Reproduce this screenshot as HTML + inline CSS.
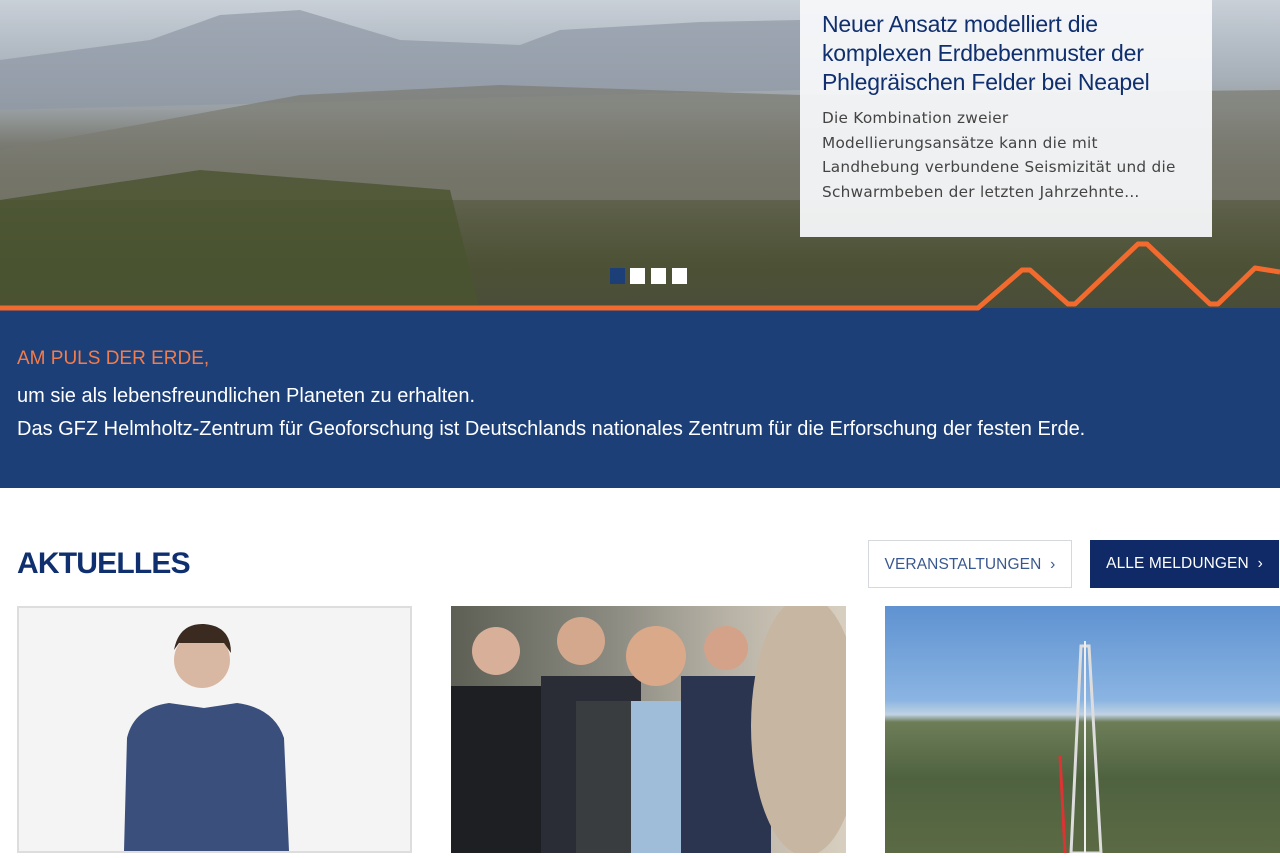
<!DOCTYPE html>
<html><head><meta charset="utf-8"><style>
*{margin:0;padding:0;box-sizing:border-box}
body{width:1280px;height:853px;overflow:hidden;font-family:"Liberation Sans",sans-serif;background:#fff;position:relative}
.hero{position:absolute;left:0;top:0;width:1280px;height:310px;background:linear-gradient(180deg,#c9d0d8 0%,#b7bfc8 12%,#a7afb8 25%,#9aa0a3 35%,#7d7f78 45%,#6a6a5c 55%,#5a5d45 70%,#4d5236 85%,#4a4d38 100%)}
.card{position:absolute;left:800px;top:0;width:412px;height:237px;background:rgba(246,247,249,.95);padding:10px 22px}
.card h2{font-size:23px;line-height:29px;color:#0f2f6f;font-weight:normal;letter-spacing:-.2px}
.card p{font-family:"DejaVu Sans",sans-serif;font-size:15.3px;line-height:24.5px;color:#444;margin-top:9px;letter-spacing:.25px;white-space:nowrap}
.band{position:absolute;left:0;top:308px;width:1280px;height:180px;background:#1c3f78;padding:40px 17px 0}
.band .o{color:#f47c4a;font-size:19px;margin-bottom:10px}
.band .w{color:#fff;font-size:20px;line-height:33px;letter-spacing:0}
h1{position:absolute;left:17px;top:547px;font-size:30px;color:#0f2f6f;font-weight:bold;letter-spacing:-.8px}
.btn{position:absolute;top:540px;height:48px;font-size:15.5px;line-height:47px;text-align:center;letter-spacing:.1px}
.b1{left:868px;width:204px;border:1px solid #d5d8dc;color:#3a5890}
.b2{left:1090px;width:189px;background:#0f2a66;color:#fff}
.img{position:absolute;top:606px;height:247px;width:395px}
</style></head><body>
<div class="hero">
<svg width="1280" height="310" style="position:absolute;left:0;top:0">
<path d="M0 60 L150 40 L220 15 L300 10 L400 40 L520 45 L560 30 L700 22 L800 20 L800 90 L0 110Z" fill="#8f98a5" opacity=".7"/>
<path d="M0 150 L300 95 L500 85 L800 95 L1280 90 L1280 200 L0 200Z" fill="#7a7b70" opacity=".7"/>
<path d="M0 200 L200 170 L450 190 L480 310 L0 310Z" fill="#4a5430" opacity=".8"/>
<rect x="610" y="268" width="15" height="16" fill="#1c3f78"/>
<rect x="630" y="268" width="15" height="16" fill="#fff"/>
<rect x="651" y="268" width="15" height="16" fill="#fff"/>
<rect x="672" y="268" width="15" height="16" fill="#fff"/>
</svg>
<div class="card"><h2>Neuer Ansatz modelliert die komplexen Erdbebenmuster der Phlegräischen Felder bei Neapel</h2><p>Die Kombination zweier<br>Modellierungsansätze kann die mit<br>Landhebung verbundene Seismizität und die<br>Schwarmbeben der letzten Jahrzehnte...</p></div>
</div>
<div class="band"><div class="o">AM PULS DER ERDE,</div><div class="w">um sie als lebensfreundlichen Planeten zu erhalten.<br>Das GFZ Helmholtz-Zentrum für Geoforschung ist Deutschlands nationales Zentrum für die Erforschung der festen Erde.</div></div>
<svg width="1280" height="320" style="position:absolute;left:0;top:0">
<path d="M0 308 L978 308 L1022 270 L1030 270 L1068 304 L1075 304 L1138 244 L1147 244 L1210 304 L1218 304 L1255 268 L1280 272" fill="none" stroke="#f26a2e" stroke-width="5" stroke-linejoin="round"/>
</svg>
<h1>AKTUELLES</h1>
<div class="btn b1">VERANSTALTUNGEN &nbsp;›</div>
<div class="btn b2">ALLE MELDUNGEN &nbsp;›</div>
<div class="img" style="left:17px;border:2px solid #ddd;background:#f4f4f4">
<svg width="391" height="243"><circle cx="183" cy="52" r="28" fill="#d9b8a3"/><path d="M155 42 Q160 15 185 16 Q212 18 212 45 L205 35 L160 35Z" fill="#3a2a20"/><path d="M105 243 L108 130 Q115 100 150 95 L185 100 L218 95 Q255 100 265 130 L270 243Z" fill="#3b4f7c"/></svg></div>
<div class="img" style="left:451px;background:linear-gradient(90deg,#5d5f55,#8a8a80 40%,#b8b2a6 70%,#d8cfc0)">
<svg width="395" height="247"><rect x="0" y="80" width="100" height="167" fill="#1d1f22"/><rect x="90" y="70" width="100" height="177" fill="#2a2d35"/><rect x="125" y="95" width="165" height="152" fill="#3a3d40"/><rect x="180" y="95" width="50" height="152" fill="#9fbcd8"/><circle cx="205" cy="50" r="30" fill="#d9a98a"/><circle cx="45" cy="45" r="24" fill="#d8b09a"/><circle cx="130" cy="35" r="24" fill="#d4a88d"/><circle cx="275" cy="42" r="22" fill="#d3a288"/><rect x="230" y="70" width="90" height="177" fill="#2c3550"/><ellipse cx="355" cy="120" rx="55" ry="130" fill="#c7b7a2"/></svg></div>
<div class="img" style="left:885px;background:linear-gradient(180deg,#5f92d1 0%,#8ab4e2 38%,#c0d2e3 44%,#6d7d58 47%,#4f6240 70%,#5b6a44 100%)">
<svg width="395" height="247"><path d="M196 40 L204 40 L216 247 L186 247Z" fill="none" stroke="#ddd" stroke-width="3"/><line x1="200" y1="35" x2="200" y2="247" stroke="#eee" stroke-width="2"/><path d="M175 150 L180 247" stroke="#d33" stroke-width="3"/></svg></div>
</body></html>
